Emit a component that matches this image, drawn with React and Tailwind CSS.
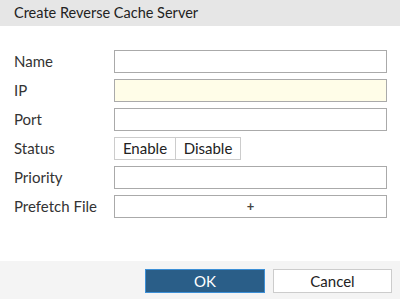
import React from 'react';

const Row = ({ label, children }) => (
    <div className="flex items-center h-[23px]">
        <div className="w-[100px] text-[15px] text-[#333]">{label}</div>
        <div className="flex-1">{children}</div>
    </div>
);

const Field = ({ yellow }) => (
    <div className={`h-[23px] border border-[#aaa] ${yellow ? 'bg-[#fffde8]' : 'bg-white'}`} />
);

export default function App() {
    return (
        <div className="w-[400px] h-[299px] bg-white flex flex-col font-['Lato',_sans-serif] text-[#333]">
            <div className="h-[26px] bg-[#e6e6e6] flex items-center px-[14px] text-[14.5px] text-[#222] shrink-0">
                Create Reverse Cache Server
            </div>

            <div className="flex-1 pl-[14px] pr-[13px] pt-[24px] flex flex-col gap-[6px]">
                <Row label="Name"><Field /></Row>
                <Row label="IP"><Field yellow /></Row>
                <Row label="Port"><Field /></Row>
                <Row label="Status">
                    <div className="flex h-[23px] text-[15px] text-[#222]">
                        <div className="w-[62px] border border-[#ccc] flex items-center justify-center">Enable</div>
                        <div className="w-[65px] border border-l-0 border-[#ccc] flex items-center justify-center">Disable</div>
                    </div>
                </Row>
                <Row label="Priority"><Field /></Row>
                <Row label="Prefetch File">
                    <div className="h-[23px] border border-[#aaa] bg-white flex items-center justify-center text-[#444] font-bold text-[13px] leading-none">
                        +
                    </div>
                </Row>
            </div>

            <div className="h-[38px] bg-[#f4f4f4] shrink-0 flex items-start pt-[8px] pl-[145px] gap-[8px]">
                <button className="w-[120px] h-[24px] bg-[#2a5e88] border border-[#3c8fd6] text-white text-[15px] flex items-center justify-center">
                    OK
                </button>
                <button className="w-[119px] h-[24px] bg-white border border-[#ccc] text-[#222] text-[15px] flex items-center justify-center">
                    Cancel
                </button>
            </div>
        </div>
    );
}
